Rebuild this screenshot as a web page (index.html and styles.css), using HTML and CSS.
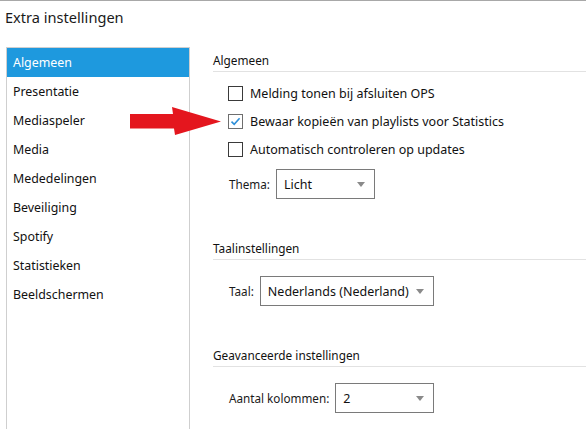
FILE: index.html
```html
<!DOCTYPE html>
<html lang="nl">
<head>
<meta charset="utf-8">
<title>Extra instellingen</title>
<link rel="stylesheet" href="styles.css">
</head>
<body>
<div class="window">
  <div class="title">Extra instellingen</div>
  <div class="layout">
    <nav class="sidebar">
      <div class="nav-item active">Algemeen</div>
      <div class="nav-item">Presentatie</div>
      <div class="nav-item">Mediaspeler</div>
      <div class="nav-item">Media</div>
      <div class="nav-item">Mededelingen</div>
      <div class="nav-item">Beveiliging</div>
      <div class="nav-item">Spotify</div>
      <div class="nav-item">Statistieken</div>
      <div class="nav-item">Beeldschermen</div>
    </nav>
    <main class="panel">
      <section class="group">
        <div class="group-head">Algemeen</div>
        <div class="checks">
          <label class="check"><span class="box"></span>Melding tonen bij afsluiten OPS</label>
          <label class="check"><span class="box checked"><svg viewBox="0 0 15 15" width="15" height="15"><path d="M3.5 7.6 L6.2 10.3 L11.6 4.2" fill="none" stroke="#2e8fd8" stroke-width="1.6"/></svg></span>Bewaar kopieën van playlists voor Statistics</label>
          <label class="check"><span class="box"></span>Automatisch controleren op updates</label>
        </div>
        <div class="field first-field">
          <span class="label">Thema:</span>
          <div class="select w-thema"><span>Licht</span><span class="caret"></span></div>
        </div>
      </section>
      <section class="group">
        <div class="group-head">Taalinstellingen</div>
        <div class="field">
          <span class="label">Taal:</span>
          <div class="select w-taal"><span>Nederlands (Nederland)</span><span class="caret"></span></div>
        </div>
      </section>
      <section class="group">
        <div class="group-head">Geavanceerde instellingen</div>
        <div class="field">
          <span class="label">Aantal kolommen:</span>
          <div class="select w-kol"><span>2</span><span class="caret"></span></div>
        </div>
      </section>
    </main>
  </div>
  <svg class="arrow" width="100" height="34" viewBox="0 0 100 34">
    <polygon points="0,7 43,7 42,0 91,14.5 45,28 44,21.5 0,21.5" fill="#e4161e"/>
  </svg>
</div>
</body>
</html>
```

FILE: styles.css
```css
html, body {
  margin: 0;
  padding: 0;
  background: #ffffff;
}
body {
  width: 586px;
  height: 429px;
  overflow: hidden;
  font-family: "Noto Sans", "Open Sans", "DejaVu Sans", sans-serif;
  color: #111111;
}
.window {
  position: relative;
  height: 429px;
  box-sizing: border-box;
  border-top: 1px solid #a8a8a8;
}
.title {
  font-size: 14.6px;
  padding: 6px 0 0 5px;
  height: 46px;
  box-sizing: border-box;
  color: #1a1a1a;
}
.layout {
  display: flex;
  align-items: flex-start;
  padding-left: 6px;
}
.sidebar {
  width: 184px;
  height: 400px;
  box-sizing: border-box;
  border: 1px solid #cfcfcf;
  border-bottom: none;
  font-size: 12.4px;
}
.nav-item {
  height: 29px;
  line-height: 29px;
  padding-left: 6px;
}
.nav-item.active {
  background: #1e99de;
  color: #ffffff;
}
.panel {
  flex: 1;
  margin-left: 23px;
  font-size: 12.5px;
}
.group-head {
  height: 25px;
  line-height: 24px;
  box-sizing: border-box;
  border-bottom: 1px solid #e2e2e2;
  padding-top: 1px;
  font-size: 11.8px;
}
.checks {
  padding-top: 7px;
  padding-left: 15px;
}
.check {
  display: flex;
  align-items: center;
  height: 28px;
  gap: 7px;
}
.box {
  width: 15px;
  height: 15px;
  box-sizing: border-box;
  border: 1px solid #3a3a3a;
  background: #ffffff;
  display: flex;
}
.box.checked {
  border-color: #6e6e6e;
}
.box svg {
  margin: -1px;
}
.field {
  display: flex;
  align-items: center;
  gap: 6px;
  padding-left: 16px;
  margin-top: 16px;
  margin-bottom: 36px;
}
.first-field {
  margin-top: 6px;
}
.label {
  color: #1a1a1a;
  font-size: 11.7px;
}
.select {
  height: 30px;
  box-sizing: border-box;
  border: 1px solid #7a7a7a;
  display: flex;
  align-items: center;
  justify-content: space-between;
  padding: 0 9px 0 7px;
  font-size: 12.5px;
}
.w-thema { width: 99px; }
.w-taal { width: 174px; }
.w-kol { width: 99px; }
.caret {
  width: 0;
  height: 0;
  border-left: 4px solid transparent;
  border-right: 4px solid transparent;
  border-top: 5px solid #8a8a8a;
}
.arrow {
  position: absolute;
  left: 130px;
  top: 106px;
}
```
